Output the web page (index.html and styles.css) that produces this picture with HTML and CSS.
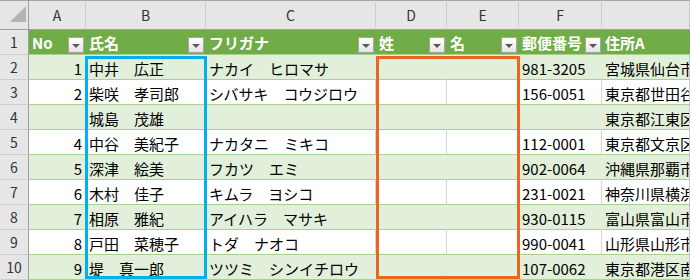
FILE: index.html
```html
<!DOCTYPE html>
<html lang="ja">
<head>
    <meta charset="UTF-8">
    <title>名簿</title>
    <link rel="stylesheet" href="styles.css">
</head>
<body>
<div class="wrap">
    <div class="sheet">
        <!-- 列見出し -->
        <div class="corner"><span class="tri"></span></div>
        <div class="col">A</div>
        <div class="col">B</div>
        <div class="col">C</div>
        <div class="col">D</div>
        <div class="col">E</div>
        <div class="col">F</div>
        <div class="col last"></div>

        <!-- 1: テーブル見出し -->
        <div class="rh">1</div>
        <div class="th">No<span class="fb"></span></div>
        <div class="th">氏名<span class="fb"></span></div>
        <div class="th">フリガナ<span class="fb"></span></div>
        <div class="th">姓<span class="fb"></span></div>
        <div class="th">名<span class="fb"></span></div>
        <div class="th tight">郵便番号<span class="fb"></span></div>
        <div class="th last">住所A</div>

        <div class="rh">2</div>
        <div class="c g num">1</div>
        <div class="c g">中井　広正</div>
        <div class="c g">ナカイ　ヒロマサ</div>
        <div class="c g"></div>
        <div class="c g"></div>
        <div class="c g">981-3205</div>
        <div class="c g last">宮城県仙台市</div>

        <div class="rh">3</div>
        <div class="c num">2</div>
        <div class="c">柴咲　孝司郎</div>
        <div class="c">シバサキ　コウジロウ</div>
        <div class="c"></div>
        <div class="c"></div>
        <div class="c">156-0051</div>
        <div class="c last">東京都世田谷</div>

        <div class="rh">4</div>
        <div class="c g num"></div>
        <div class="c g">城島　茂雄</div>
        <div class="c g"></div>
        <div class="c g"></div>
        <div class="c g"></div>
        <div class="c g"></div>
        <div class="c g last">東京都江東区</div>

        <div class="rh">5</div>
        <div class="c num">4</div>
        <div class="c">中谷　美紀子</div>
        <div class="c">ナカタニ　ミキコ</div>
        <div class="c"></div>
        <div class="c"></div>
        <div class="c">112-0001</div>
        <div class="c last">東京都文京区</div>

        <div class="rh">6</div>
        <div class="c g num">5</div>
        <div class="c g">深津　絵美</div>
        <div class="c g">フカツ　エミ</div>
        <div class="c g"></div>
        <div class="c g"></div>
        <div class="c g">902-0064</div>
        <div class="c g last">沖縄県那覇市</div>

        <div class="rh">7</div>
        <div class="c num">6</div>
        <div class="c">木村　佳子</div>
        <div class="c">キムラ　ヨシコ</div>
        <div class="c"></div>
        <div class="c"></div>
        <div class="c">231-0021</div>
        <div class="c last">神奈川県横浜</div>

        <div class="rh">8</div>
        <div class="c g num">7</div>
        <div class="c g">相原　雅紀</div>
        <div class="c g">アイハラ　マサキ</div>
        <div class="c g"></div>
        <div class="c g"></div>
        <div class="c g">930-0115</div>
        <div class="c g last">富山県富山市</div>

        <div class="rh">9</div>
        <div class="c num">8</div>
        <div class="c">戸田　菜穂子</div>
        <div class="c">トダ　ナオコ</div>
        <div class="c"></div>
        <div class="c"></div>
        <div class="c">990-0041</div>
        <div class="c last">山形県山形市</div>

        <div class="rh">10</div>
        <div class="c g num">9</div>
        <div class="c g">堤　真一郎</div>
        <div class="c g">ツツミ　シンイチロウ</div>
        <div class="c g"></div>
        <div class="c g"></div>
        <div class="c g">107-0062</div>
        <div class="c g last">東京都港区南</div>
    </div>

    <!-- 選択枠 -->
    <div class="frame blue"></div>
    <div class="frame orange"></div>
</div>
</body>
</html>
```

FILE: styles.css
```css
body {
    margin: 0;
    background: #fff;
    font-family: "Noto Sans CJK JP", "Noto Sans", sans-serif;
    color: #000;
}
.wrap {
    position: relative;
    width: 690px;
    height: 280px;
    overflow: hidden;
}
.sheet {
    display: grid;
    grid-template-columns: 29px 57px 120px 170px 71px 72px 83px 88px;
    grid-template-rows: 30px repeat(10, 25px);
}
.sheet > div {
    box-sizing: border-box;
    display: flex;
    align-items: center;
    overflow: hidden;
    white-space: nowrap;
}

/* 見出し (グレー) */
.corner, .col {
    background: #e6e6e6;
    border-top: 1px solid #a6a6a6;
    border-bottom: 1px solid #9e9e9e;
    border-right: 1px solid #cdcdcd;
}
.corner {
    justify-content: flex-end;
    align-items: flex-end;
    padding: 0 2px 2px 0;
    border-right-color: #9e9e9e;
}
.tri {
    width: 0;
    height: 0;
    border-left: 16px solid transparent;
    border-bottom: 16px solid #b4b4b4;
}
.col {
    justify-content: center;
    font-size: 14px;
    color: #333;
}
.rh {
    background: #e6e6e6;
    border-right: 1px solid #9e9e9e;
    border-bottom: 1px solid #cdcdcd;
    justify-content: center;
    font-size: 14px;
    color: #333;
}

/* テーブル見出し */
.th {
    background: #70ad47;
    color: #fff;
    font-weight: bold;
    font-size: 15px;
    padding: 0 2px 0 3px;
    border-bottom: 1px solid #a9d08e;
}
.th.tight { padding-right: 1px; }
.fb {
    margin-left: auto;
    align-self: flex-end;
    margin-bottom: 1px;
    width: 16px;
    height: 16px;
    box-sizing: border-box;
    border: 1px solid #a6a6a6;
    background: linear-gradient(#ffffff, #e4e4e4);
    display: flex;
    align-items: center;
    justify-content: center;
    padding-top: 2px;
}
.fb::after {
    content: "";
    border-left: 4px solid transparent;
    border-right: 4px solid transparent;
    border-top: 4px solid #595959;
}

/* データ */
.c {
    font-size: 15px;
    padding: 2px 3px 0;
    border-right: 1px solid #d4d4d4;
    border-bottom: 1px solid #a9d08e;
}
.c.g {
    background: #e2efda;
    border-right-color: #e2efda;
}
.num { justify-content: flex-end; }
.last { border-right-color: #c8c8c8 !important; }

/* 選択枠 */
.frame {
    position: absolute;
    top: 56px;
    height: 223px;
    box-sizing: border-box;
    border: 3px solid;
}
.blue {
    left: 85px;
    width: 122px;
    border-color: #00b0f0;
}
.orange {
    left: 376px;
    width: 144px;
    border-color: #eb6620;
}
```
